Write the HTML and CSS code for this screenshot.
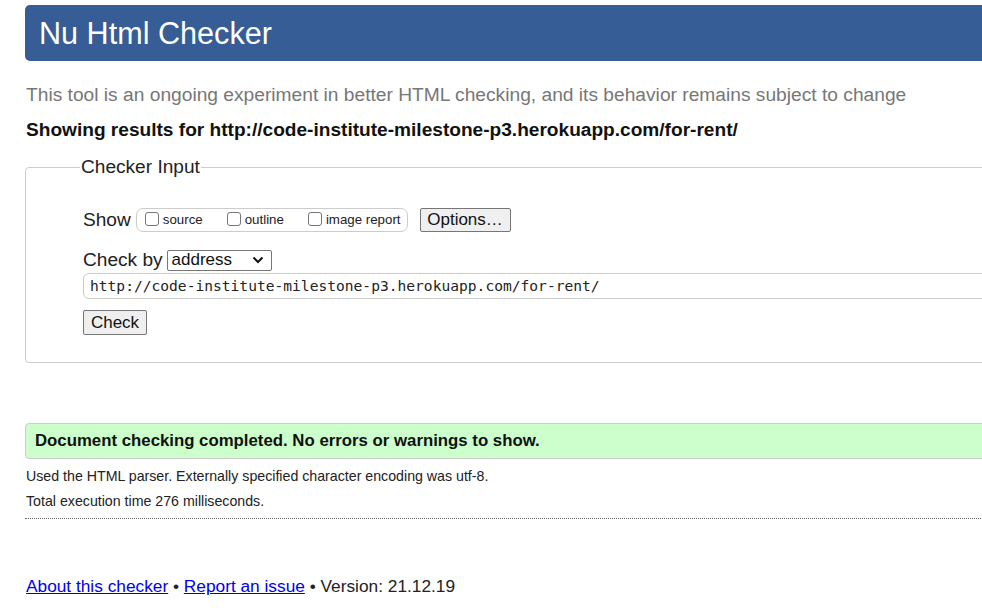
FILE: index.html
```html
<!DOCTYPE html>
<html lang="en">
<head>
<meta charset="utf-8">
<title>Nu Html Checker</title>
<link rel="stylesheet" href="styles.css">
</head>
<body>
<div class="page">
  <h1 class="banner">Nu Html Checker</h1>
  <p class="intro">This tool is an ongoing experiment in better HTML checking, and its behavior remains subject to change</p>
  <p class="showing">Showing results for http://code-institute-milestone-p3.herokuapp.com/for-rent/</p>
  <fieldset class="checker">
    <legend>Checker Input</legend>
    <div class="row show-row">
      <span class="label">Show</span>
      <span class="group">
        <label class="opt"><input type="checkbox" class="cb">source</label>
        <label class="opt"><input type="checkbox" class="cb">outline</label>
        <label class="opt"><input type="checkbox" class="cb">image report</label>
      </span>
      <button class="btn options">Options…</button>
    </div>
    <div class="row by-row">
      <span class="label">Check by</span>
      <span class="select">address
        <svg class="chev" width="12" height="8" viewBox="0 0 12 8"><path d="M1.5 1.5 L6 6 L10.5 1.5" fill="none" stroke="#111" stroke-width="2"/></svg>
      </span>
    </div>
    <div class="url">http://code-institute-milestone-p3.herokuapp.com/for-rent/</div>
    <button class="btn check">Check</button>
  </fieldset>
  <p class="success">Document checking completed. No errors or warnings to show.</p>
  <p class="details">Used the HTML parser. Externally specified character encoding was utf-8.</p>
  <p class="details">Total execution time 276 milliseconds.</p>
  <hr class="dots">
  <p class="footer"><a href="#">About this checker</a> • <a href="#">Report an issue</a> • Version: 21.12.19</p>
</div>
</body>
</html>
```

FILE: styles.css
```css
html, body {
  margin: 0;
  padding: 0;
  overflow: hidden;
  background: #fff;
}
body {
  font-family: "Liberation Sans", Arial, sans-serif;
  color: #222;
}
.page {
  width: 1100px;
  margin-left: 25px;
  padding-top: 5px;
}
.banner {
  margin: 0;
  height: 56px;
  box-sizing: border-box;
  background: #365d95;
  color: #fff;
  font-weight: normal;
  font-size: 30.6px;
  line-height: 56px;
  padding-left: 14px;
  border-radius: 5px;
}
.intro {
  margin: 22px 0 0 1px;
  font-size: 19.2px;
  line-height: 24px;
  color: #777;
}
.showing {
  margin: 11px 0 0 1px;
  font-size: 19.1px;
  line-height: 24px;
  font-weight: bold;
  color: #111;
}
.checker {
  margin: 13px 0 0 0;
  border: 1px solid #ccc;
  border-radius: 4px;
  padding: 28px 0 27px 57px;
  min-width: 0;
}
.checker legend {
  font-size: 19.1px;
  line-height: 24px;
  padding: 0 1px;
  margin-left: -3px;
  color: #222;
}
.row {
  display: flex;
  align-items: center;
}
.label {
  font-size: 19.1px;
  line-height: 24px;
  margin-right: 4px;
}
.show-row {
  height: 26px;
}
.group {
  display: flex;
  align-items: center;
  height: 22px;
  border: 1px solid #ccc;
  border-radius: 7px;
  padding: 0 6px 0 8px;
  margin-left: 1px;
}
.opt {
  display: flex;
  align-items: center;
  font-size: 13.3px;
  color: #222;
  line-height: 16px;
}
.opt + .opt {
  margin-left: 24px;
}
.cb {
  appearance: none;
  -webkit-appearance: none;
  width: 14px;
  height: 14px;
  border: 1px solid #767676;
  border-radius: 3px;
  margin: -3px 4px 0 0;
  background: #fff;
}
.btn {
  font-family: "Liberation Sans", Arial, sans-serif;
  font-size: 17px;
  background: #efefef;
  border: 1px solid #767676;
  border-radius: 2px;
  color: #111;
  padding: 0;
}
.options {
  margin-left: 12px;
  width: 91px;
  height: 24px;
}
.by-row {
  margin-top: 15px;
  height: 24px;
}
.select {
  display: flex;
  align-items: center;
  justify-content: space-between;
  box-sizing: border-box;
  width: 105px;
  height: 21px;
  border: 1px solid #767676;
  border-radius: 2px;
  font-size: 17px;
  padding: 0 7px 0 4px;
  margin-left: 0;
  color: #111;
}
.url {
  margin-top: 1px;
  height: 26px;
  box-sizing: border-box;
  border: 1px solid #ccc;
  border-radius: 6px;
  font-family: "DejaVu Sans Mono", "Liberation Mono", monospace;
  font-size: 14.6px;
  line-height: 24px;
  padding-left: 6px;
  color: #222;
}
.check {
  margin-top: 11px;
  width: 64px;
  height: 25px;
  display: block;
}
.success {
  margin: 60px 0 0 0;
  height: 36px;
  box-sizing: border-box;
  background: #ccffcc;
  border: 1px solid #ccc;
  border-radius: 4px;
  font-size: 16.8px;
  font-weight: bold;
  line-height: 34px;
  padding-left: 9px;
  color: #111;
}
.details {
  margin: 9px 0 0 1px;
  font-size: 14.2px;
  line-height: 17px;
  color: #222;
}
.details + .details {
  margin-top: 8px;
}
.dots {
  margin: 8px 0 0 0;
  border: 0;
  border-top: 1px dotted #666;
  height: 0;
}
.footer {
  margin: 57px 0 0 1px;
  font-size: 17.3px;
  line-height: 20px;
  color: #222;
}
.footer a {
  color: #0000ee;
}
```
